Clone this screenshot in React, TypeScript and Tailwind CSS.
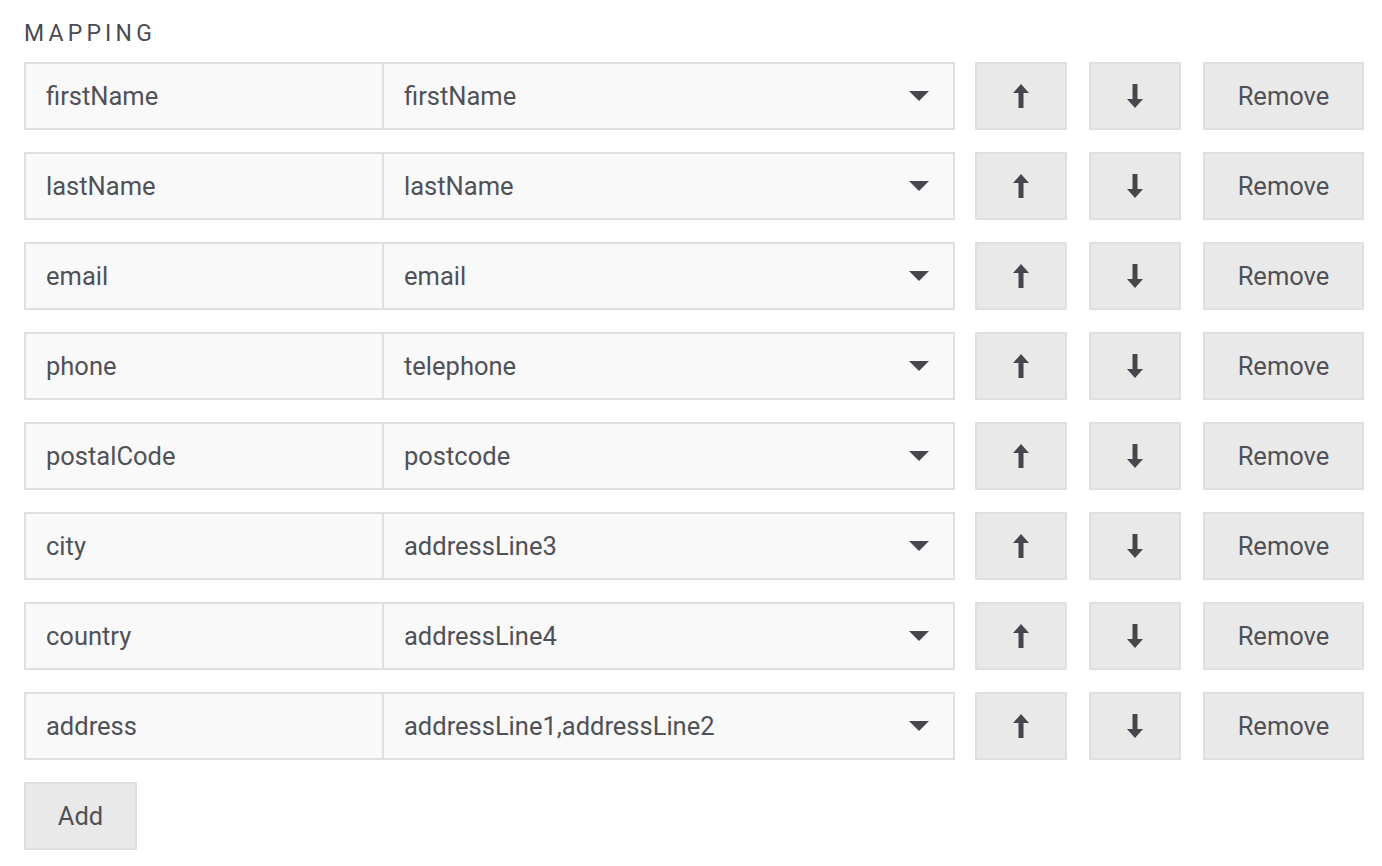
const rows = [
  { field: 'firstName', target: 'firstName' },
  { field: 'lastName', target: 'lastName' },
  { field: 'email', target: 'email' },
  { field: 'phone', target: 'telephone' },
  { field: 'postalCode', target: 'postcode' },
  { field: 'city', target: 'addressLine3' },
  { field: 'country', target: 'addressLine4' },
  { field: 'address', target: 'addressLine1,addressLine2' },
]

function ArrowUp() {
  return (
    <svg width="16" height="24" viewBox="0 0 16 24" fill="#46474d">
      <path d="M8 0 L16 9 L10.5 9 L10.5 24 L5.5 24 L5.5 9 L0 9 Z" />
    </svg>
  )
}

function ArrowDown() {
  return (
    <svg width="16" height="24" viewBox="0 0 16 24" fill="#46474d">
      <path d="M5.5 0 L10.5 0 L10.5 15 L16 15 L8 24 L0 15 L5.5 15 Z" />
    </svg>
  )
}

export default function App() {
  return (
    <div className="min-h-screen bg-white pt-[20px] pl-6 text-[#505157]" style={{ fontFamily: 'Roboto, "Liberation Sans", sans-serif' }}>
      <h2 className="text-[23px] leading-[28px] tracking-[4.2px] text-[#4a4b51] mb-[14px]">MAPPING</h2>

      <div className="flex flex-col gap-[22px]">
        {rows.map((row) => (
          <div key={row.field} className="flex items-stretch h-[68px]">
            {/* source field */}
            <div className="w-[360px] flex items-center border-2 border-[#dfdfdf] bg-[#f9f9f9] px-5 text-[25.5px]">
              {row.field}
            </div>

            {/* target select */}
            <div className="w-[571px] flex items-center justify-between border-2 border-l-0 border-[#dfdfdf] bg-[#f9f9f9] pl-5 pr-[24px] text-[25.5px]">
              <span>{row.target}</span>
              <svg width="20" height="10" viewBox="0 0 20 10" fill="#46474d">
                <path d="M0 0 L20 0 L10 10 Z" />
              </svg>
            </div>

            <button className="ml-5 w-[92px] flex items-center justify-center border-2 border-[#dfdfdf] bg-[#e9e9e9]">
              <ArrowUp />
            </button>
            <button className="ml-[22px] w-[92px] flex items-center justify-center border-2 border-[#dfdfdf] bg-[#e9e9e9]">
              <ArrowDown />
            </button>
            <button className="ml-[22px] w-[161px] flex items-center justify-center border-2 border-[#dfdfdf] bg-[#e9e9e9] text-[25.5px] text-[#505157]">
              Remove
            </button>
          </div>
        ))}
      </div>

      <button className="mt-[22px] w-[113px] h-[68px] flex items-center justify-center border-2 border-[#dfdfdf] bg-[#e9e9e9] text-[25.5px] text-[#505157]">
        Add
      </button>
    </div>
  )
}
